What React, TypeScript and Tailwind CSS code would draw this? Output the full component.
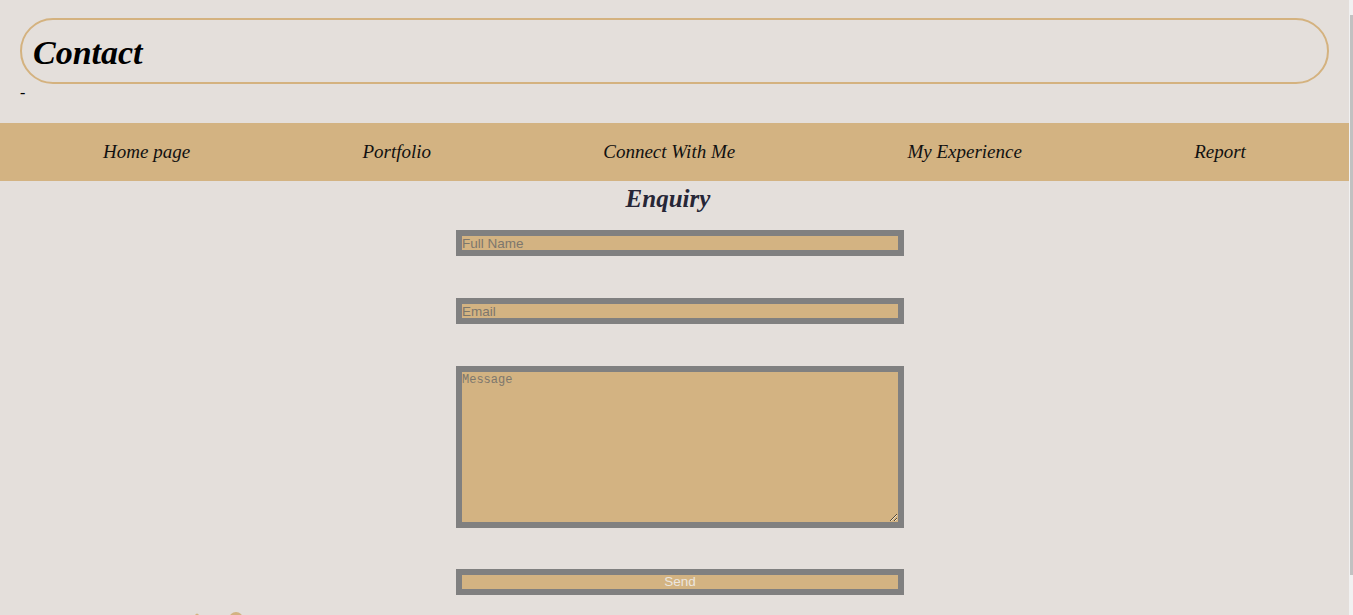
import React from "react";

const serif = { fontFamily: '"Liberation Serif", "DejaVu Serif", serif' };

export default function App() {
  const navItems = ["Home page", "Portfolio", "Connect With Me", "My Experience", "Report"];
  return (
    <div className="flex h-[615px] w-full overflow-hidden bg-[#e4dfdb]">
      <div className="flex min-w-0 flex-1 flex-col [&>*]:shrink-0" style={serif}>
        <header className="px-[20px] pt-[18px]">
          <div className="flex h-[66px] items-center rounded-full border-2 border-[#d4b27f] pl-[11px] pt-[3px]">
            <h1 className="text-[34px] font-bold italic leading-none text-black">Contact</h1>
          </div>
          <div className="text-[16px] leading-[18px] text-black">-</div>
        </header>
        <nav className="mt-[21px] flex h-[58px] items-center justify-around bg-[#d3b382] px-[17px]">
          {navItems.map((n) => (
            <a key={n} className="text-[19px] italic text-[#111]">
              {n}
            </a>
          ))}
        </nav>
        <h2 className="mt-[3px] pr-[13px] text-center text-[25px] font-bold italic leading-[30px] text-[#262636]">
          Enquiry
        </h2>
        <form
          className="ml-[456px] mt-[16px] flex w-[448px] flex-col gap-[42px] [&>*]:shrink-0"
          style={{ fontFamily: '"Liberation Sans", Arial, sans-serif' }}
        >
          <input
            placeholder="Full Name"
            className="box-border h-[26px] border-[6px] border-[#808080] bg-[#d3b382] p-0 text-[13.5px] leading-[14px] outline-none placeholder:text-[#7d776d]"
          />
          <input
            placeholder="Email"
            className="box-border h-[26px] border-[6px] border-[#808080] bg-[#d3b382] p-0 text-[13.5px] leading-[14px] outline-none placeholder:text-[#7d776d]"
          />
          <textarea
            placeholder="Message"
            className="h-[162px] resize border-[6px] border-[#808080] bg-[#d3b382] p-0 pt-[1px] text-[12px] leading-[14px] outline-none placeholder:text-[#7d776d]"
            style={{ fontFamily: '"Liberation Mono", "DejaVu Sans Mono", monospace' }}
          />
          <button
            type="button"
            className="-mt-[1px] h-[26px] border-[6px] border-[#808080] bg-[#d3b382] p-0 text-[13.5px] leading-[14px] text-[#ece6df]"
          >
            Send
          </button>
        </form>
        <div className="mt-[16px] flex items-start gap-[28px] pl-[193px]">
          <svg width="8" height="20" viewBox="0 0 8 20" fill="#d3b382">
            <path d="M2 4 Q4 1 6 4 L6 20 L2 20 Z" />
          </svg>
          <svg width="14" height="20" viewBox="0 0 14 20" fill="#d3b382">
            <circle cx="7" cy="8" r="7" />
          </svg>
        </div>
      </div>
      <div className="flex w-[4px] shrink-0 flex-col bg-[#f1f1f1] pt-[15px] pb-[40px]">
        <div className="ml-[1px] flex-1 bg-[#c1c1c1]" />
      </div>
    </div>
  );
}
